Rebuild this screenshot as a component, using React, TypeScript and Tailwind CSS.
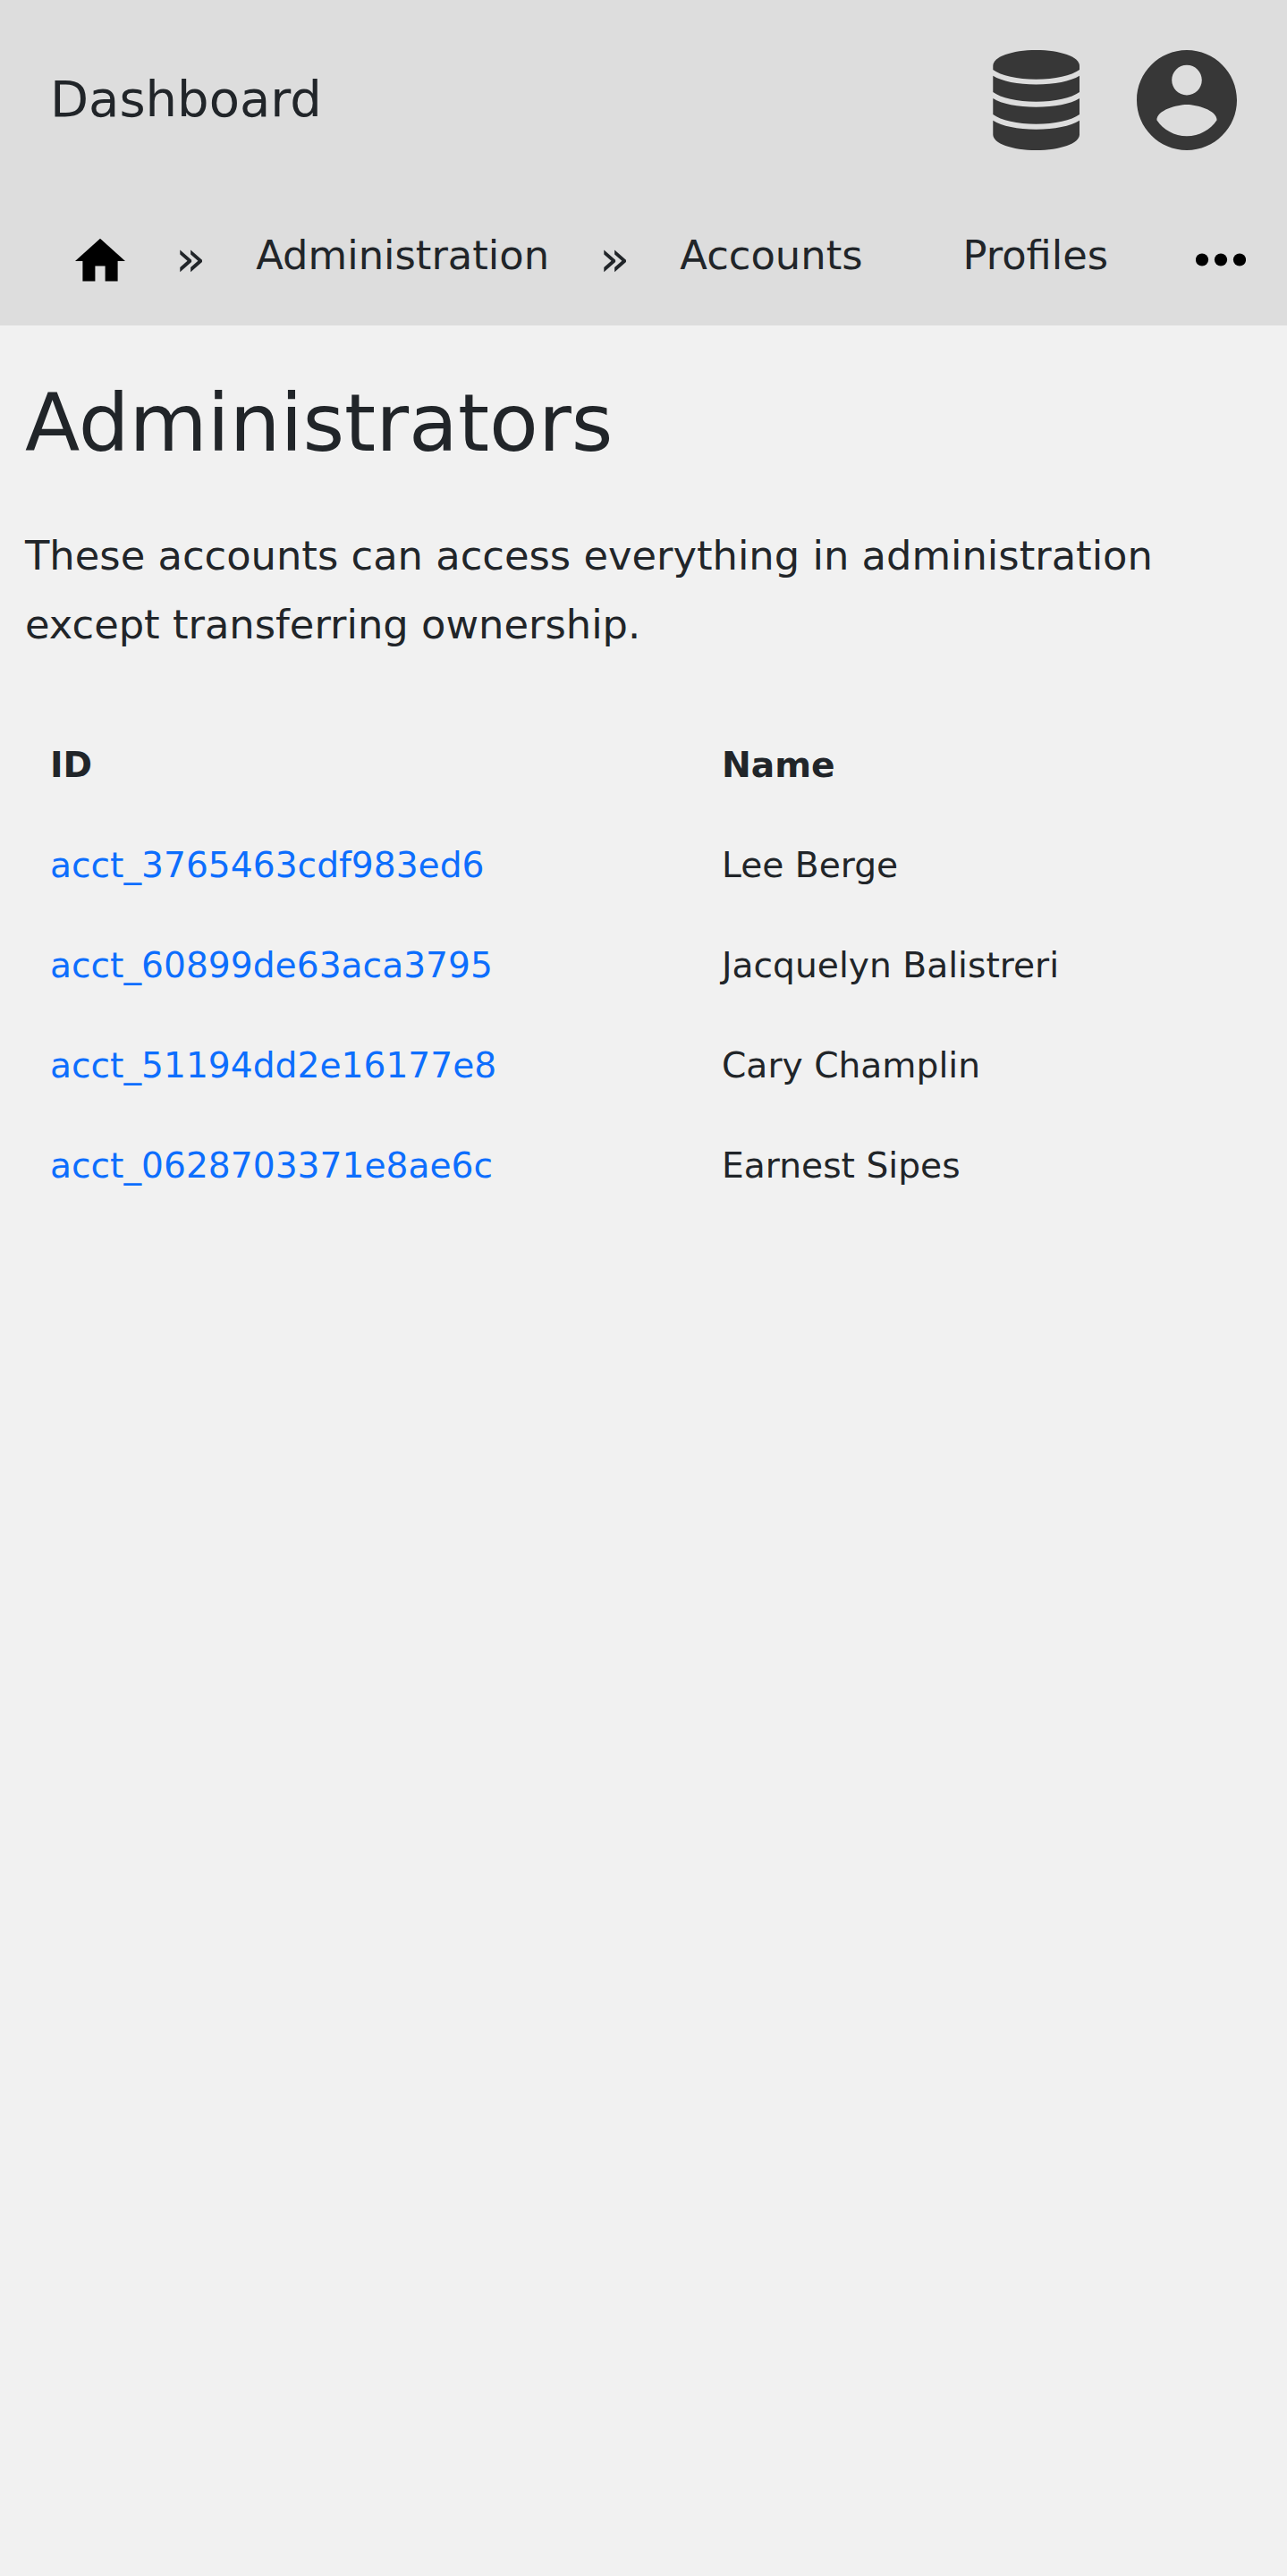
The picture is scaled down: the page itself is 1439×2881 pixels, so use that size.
import React from "react";

const admins = [
  { id: "acct_3765463cdf983ed6", name: "Lee Berge" },
  { id: "acct_60899de63aca3795", name: "Jacquelyn Balistreri" },
  { id: "acct_51194dd2e16177e8", name: "Cary Champlin" },
  { id: "acct_0628703371e8ae6c", name: "Earnest Sipes" },
];

function DatabaseIcon() {
  return (
    <svg className="h-[112px] w-[97px]" viewBox="0 0 97 112" fill="#373737">
      <path d="M.3 17.5C.3 7.5 21.5 0 48.5 0S97 7.5 97 17.5V22C88 28.6 69.5 32.8 48.5 32.8S9 28.6 .3 22Z" />
      <path d="M.3 28.8C10 35 28 38.4 48.5 38.4S87 35 97 28.8V47C88 53.6 69.5 57.8 48.5 57.8S9 53.6 .3 47Z" />
      <path d="M.3 54C10 60.2 28 63.7 48.5 63.7S87 60.2 97 54V72C88 78.6 69.5 82.8 48.5 82.8S9 78.6 .3 72Z" />
      <path d="M.3 78.8C10 85 28 88.8 48.5 88.8S87 85 97 78.8V94.5C97 104.5 75.5 112 48.5 112S.3 104.5 .3 94.5Z" />
    </svg>
  );
}

function AccountIcon() {
  return (
    <svg className="size-[112px]" viewBox="2 2 20 20" fill="#373737">
      <path d="M12 2C6.48 2 2 6.48 2 12s4.48 10 10 10 10-4.48 10-10S17.52 2 12 2zm0 3c1.66 0 3 1.34 3 3s-1.34 3-3 3-3-1.34-3-3 1.34-3 3-3zm0 14.2c-2.5 0-4.71-1.28-6-3.22.03-1.99 4-3.08 6-3.08 1.99 0 5.97 1.09 6 3.08-1.29 1.94-3.5 3.22-6 3.22z" />
    </svg>
  );
}

function HomeIcon() {
  return (
    <svg className="h-[48px] w-[56px]" viewBox="0 0 56 48">
      <path d="M22.4 47.4V30.6h11.2v16.8h14V25H56L28 -.2 0 25h8.4v22.4z" />
    </svg>
  );
}

function MoreIcon() {
  return (
    <svg className="h-[15px] w-[56px]" viewBox="0 0 56 15">
      <circle cx="7" cy="7.5" r="7.1" />
      <circle cx="28" cy="7.5" r="7.1" />
      <circle cx="49" cy="7.5" r="7.1" />
    </svg>
  );
}

function Separator() {
  return <span className="px-[28px] pt-[3px] text-[56px] leading-[75px]">»</span>;
}

export default function App() {
  return (
    <div className="min-h-[2881px] bg-[#f1f1f1] font-['DejaVu_Sans',sans-serif] text-[#212529]">
      <div className="bg-[#dddddd]">
        <header className="flex h-[224px] items-center justify-between px-[56px]">
          <a className="pb-[3px] text-[56px] leading-[83px]">Dashboard</a>
          <div className="flex items-center gap-[64px]">
            <DatabaseIcon />
            <AccountIcon />
          </div>
        </header>
        <nav className="flex h-[140px] items-start pt-[24px] pr-[46px] pl-[56px] text-[44.8px] leading-[75px] whitespace-nowrap">
          <a className="px-[28px] pt-[19px]">
            <HomeIcon />
          </a>
          <Separator />
          <a className="px-[28px]">Administration</a>
          <Separator />
          <a className="px-[28px]">Accounts</a>
          <a className="ml-[56px] px-[28px]">Profiles</a>
          <button className="ml-auto pt-[35px]">
            <MoreIcon />
          </button>
        </nav>
      </div>
      <main className="px-[28px]">
        <h1 className="pt-[55px] text-[89.6px] leading-[108px]">Administrators</h1>
        <p className="mt-[56px] text-[44.8px] leading-[77px]">
          These accounts can access everything in administration except transferring ownership.
        </p>
        <table className="mt-[63px] w-full table-fixed text-left text-[39.2px] leading-[55px]">
          <colgroup>
            <col className="w-[751px]" />
            <col />
          </colgroup>
          <thead>
            <tr className="h-[112px] align-top">
              <th className="px-[28px] pt-[28px] font-bold">ID</th>
              <th className="px-[28px] pt-[28px] font-bold">Name</th>
            </tr>
          </thead>
          <tbody>
            {admins.map((a) => (
              <tr key={a.id} className="h-[112px] align-top">
                <td className="px-[28px] pt-[28px] text-[#0d6efd]">{a.id}</td>
                <td className="px-[28px] pt-[28px]">{a.name}</td>
              </tr>
            ))}
          </tbody>
        </table>
      </main>
    </div>
  );
}
